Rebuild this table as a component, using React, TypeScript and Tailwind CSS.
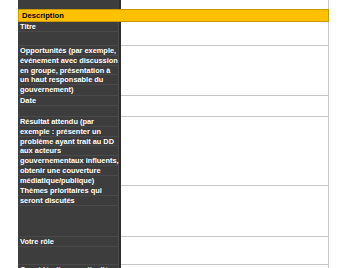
// App.tsx — planning form sheet (event description section)
type Section = {
  lines: string[];
  height: number;
};

const SECTIONS: Section[] = [
  { lines: ["Titre", ""], height: 24 },
  {
    lines: [
      "Opportunités (par exemple,",
      "événement avec discussion",
      "en groupe, présentation à",
      "un haut responsable du",
      "gouvernement)",
    ],
    height: 50,
  },
  { lines: ["Date", ""], height: 21 },
  {
    lines: [
      "Résultat attendu (par",
      "exemple : présenter un",
      "problème ayant trait au DD",
      "aux acteurs",
      "gouvernementaux influents,",
      "obtenir une couverture",
      "médiatique/publique)",
    ],
    height: 69,
  },
  { lines: ["Thèmes prioritaires qui", "seront discutés", ""], height: 51 },
  { lines: ["Votre rôle", ""], height: 28 },
  { lines: ["Considérations particulières"], height: 20 },
];

function LabelCell({ lines, height }: Section) {
  return (
    <div
      className="flex flex-col w-[103px] bg-[#3d3d3d] border-r-2 border-[#2e2e2e] overflow-hidden"
      style={{ height }}
    >
      {lines.map((line, i) => (
        <div
          key={i}
          className={
            "px-[2px] text-[7.4px] leading-[9.8px] font-bold text-white whitespace-nowrap border-b border-r border-[#4a4a4a] " +
            (i === lines.length - 1 ? "flex-1" : "h-[9.8px] shrink-0")
          }
        >
          {line}
        </div>
      ))}
    </div>
  );
}

export default function App() {
  return (
    <div
      className="w-[348px] h-[268px] overflow-hidden bg-white"
      style={{ fontFamily: '"Liberation Sans", Arial, sans-serif' }}
    >
      <div className="ml-[18px] w-[311px] flex flex-col">
        {/* tail of the previous row */}
        <div className="flex h-[9px]">
          <div className="w-[103px] bg-[#3d3d3d] border-r-2 border-[#2e2e2e]" />
          <div className="flex-1 border-r border-[#c6c6c6]" />
        </div>

        {/* section header */}
        <div className="h-[13px] bg-[#ffc000] border border-[#c99a00] px-[3px] text-[7.6px] leading-[11px] font-bold text-black">
          Description
        </div>

        {SECTIONS.map((s, i) => (
          <div key={i} className="flex">
            <LabelCell {...s} />
            <div className="flex-1 border-b border-r border-[#c6c6c6]" />
          </div>
        ))}
      </div>
    </div>
  );
}
